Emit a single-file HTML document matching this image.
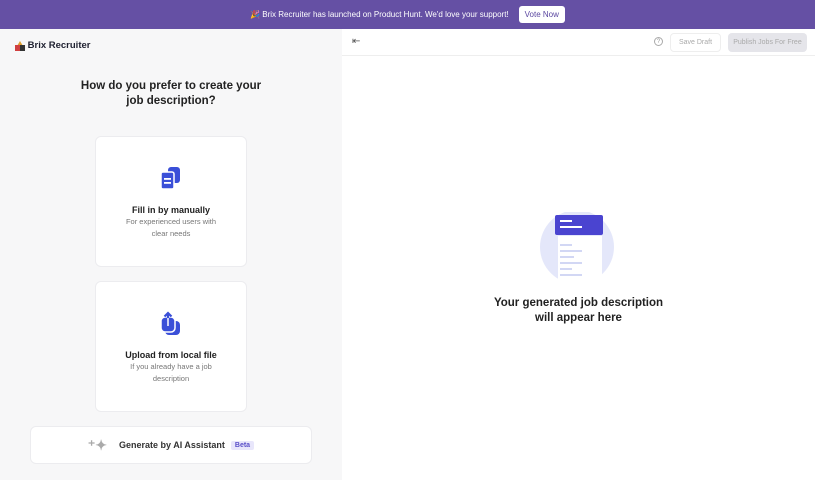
<!DOCTYPE html>
<html><head><style>
*{margin:0;padding:0;box-sizing:border-box}
body{width:815px;height:480px;overflow:hidden;font-family:"Liberation Sans",sans-serif;background:#fff;position:relative;color:#1e2030}
.banner{position:absolute;left:0;top:0;width:815px;height:29px;background:#6550a4;color:#fff;font-size:8px;display:flex;align-items:center;justify-content:center}
.vote{background:#fff;color:#5a46a0;border-radius:3px;padding:4px 6px;margin-left:10px;font-size:8px}
.left{position:absolute;left:0;top:29px;width:342px;height:451px;background:#f7f7f8}
.right{position:absolute;left:342px;top:29px;width:473px;height:451px;background:#fff}
.topbar{position:absolute;left:0;top:0;width:473px;height:27px;border-bottom:1px solid #eee}
.card{position:absolute;left:95px;width:152px;height:131px;background:#fff;border:1px solid #ececef;border-radius:6px;text-align:center}
.card b{display:block;font-size:9px;font-weight:600;color:#222}
.card span{display:block;font-size:7.5px;color:#777;line-height:12px;margin-top:1px}
</style></head><body>
<div class="banner">🎉&nbsp;Brix Recruiter has launched on Product Hunt. We'd love your support!<span class="vote">Vote Now</span></div>
<div class="left">
 <div style="position:absolute;left:15px;top:11px;font-size:9.5px;font-weight:600;display:flex;align-items:center">
  <svg width="10" height="10" viewBox="0 0 10 10"><path d="M5 0L8 5H2Z" fill="#e0a030"/><rect x="0" y="4" width="5" height="6" fill="#d04040"/><rect x="5" y="4" width="5" height="6" fill="#333"/></svg>&nbsp;Brix Recruiter</div>
 <div style="position:absolute;left:0;width:342px;top:50px;text-align:center;font-size:11.5px;font-weight:600;line-height:15px;color:#222">How do you prefer to create your<br>job description?</div>
 <div class="card" style="top:107px">
  <svg style="margin-top:28px" width="24" height="26" viewBox="0 0 24 26"><rect x="9" y="2" width="12" height="16" rx="3" fill="#3a4fd8"/><rect x="2" y="7" width="13" height="17" rx="2" fill="#3a4fd8" stroke="#fff" stroke-width="1.5"/><rect x="5" y="13" width="7" height="1.8" fill="#fff"/><rect x="5" y="17" width="7" height="1.8" fill="#fff"/></svg>
  <b style="margin-top:9px">Fill in by manually</b><span>For experienced users with<br>clear needs</span></div>
 <div class="card" style="top:252px">
  <svg style="margin-top:28px" width="24" height="26" viewBox="0 0 24 26"><rect x="6" y="11" width="15" height="14" rx="4" fill="#3a4fd8"/><rect x="2" y="7" width="14" height="15" rx="4" fill="#3a4fd8" stroke="#fff" stroke-width="1.5"/><path d="M9 16V3M5.5 6.5L9 3l3.5 3.5" stroke="#3a4fd8" stroke-width="2.2" fill="none"/><path d="M9 16V8" stroke="#fff" stroke-width="1.5"/></svg>
  <b style="margin-top:9px">Upload from local file</b><span>If you already have a job<br>description</span></div>
 <div style="position:absolute;left:30px;top:397px;width:282px;height:38px;background:#fff;border:1px solid #ececef;border-radius:6px;display:flex;align-items:center;justify-content:center;font-size:9px;font-weight:600;color:#333">
  <span style="color:#aaa;font-size:14px;margin-right:12px">⁺✦</span>Generate by AI Assistant<span style="background:#e8e6fb;color:#5a4fc8;font-size:7px;padding:1px 4px;border-radius:2px;margin-left:6px">Beta</span></div>
</div>
<div class="right">
 <div class="topbar">
  <span style="position:absolute;left:10px;top:7px;font-size:10px;color:#555">⇤</span>
  <span style="position:absolute;left:312px;top:8px;width:9px;height:9px;border:1px solid #aaa;border-radius:50%;font-size:6px;color:#999;text-align:center;line-height:8px">?</span>
  <span style="position:absolute;left:328px;top:4px;width:51px;height:19px;border:1px solid #eee;border-radius:4px;font-size:7px;color:#aaa;text-align:center;line-height:17px">Save Draft</span>
  <span style="position:absolute;left:386px;top:4px;width:79px;height:19px;background:#e5e5ea;border-radius:4px;font-size:7px;color:#aaa;text-align:center;line-height:19px">Publish Jobs For Free</span>
 </div>
 <svg style="position:absolute;left:198px;top:183px" width="78" height="70" viewBox="0 0 78 70"><circle cx="37" cy="35" r="37" fill="#e4e7fa"/><rect x="18" y="24" width="44" height="46" fill="#fff"/><g fill="#d2d7f4"><rect x="20" y="32" width="12" height="2"/><rect x="20" y="38" width="22" height="2"/><rect x="20" y="44" width="14" height="2"/><rect x="20" y="50" width="22" height="2"/><rect x="20" y="56" width="12" height="2"/><rect x="20" y="62" width="22" height="2"/></g><rect x="15" y="3" width="48" height="20" rx="2" fill="#4a44d0"/><rect x="20" y="8" width="12" height="2" fill="#fff"/><rect x="20" y="14" width="22" height="2" fill="#fff"/></svg>
 <div style="position:absolute;left:0;width:473px;top:267px;text-align:center;font-size:11.5px;font-weight:600;line-height:15px;color:#222">Your generated job description<br>will appear here</div>
</div>
</body></html>
